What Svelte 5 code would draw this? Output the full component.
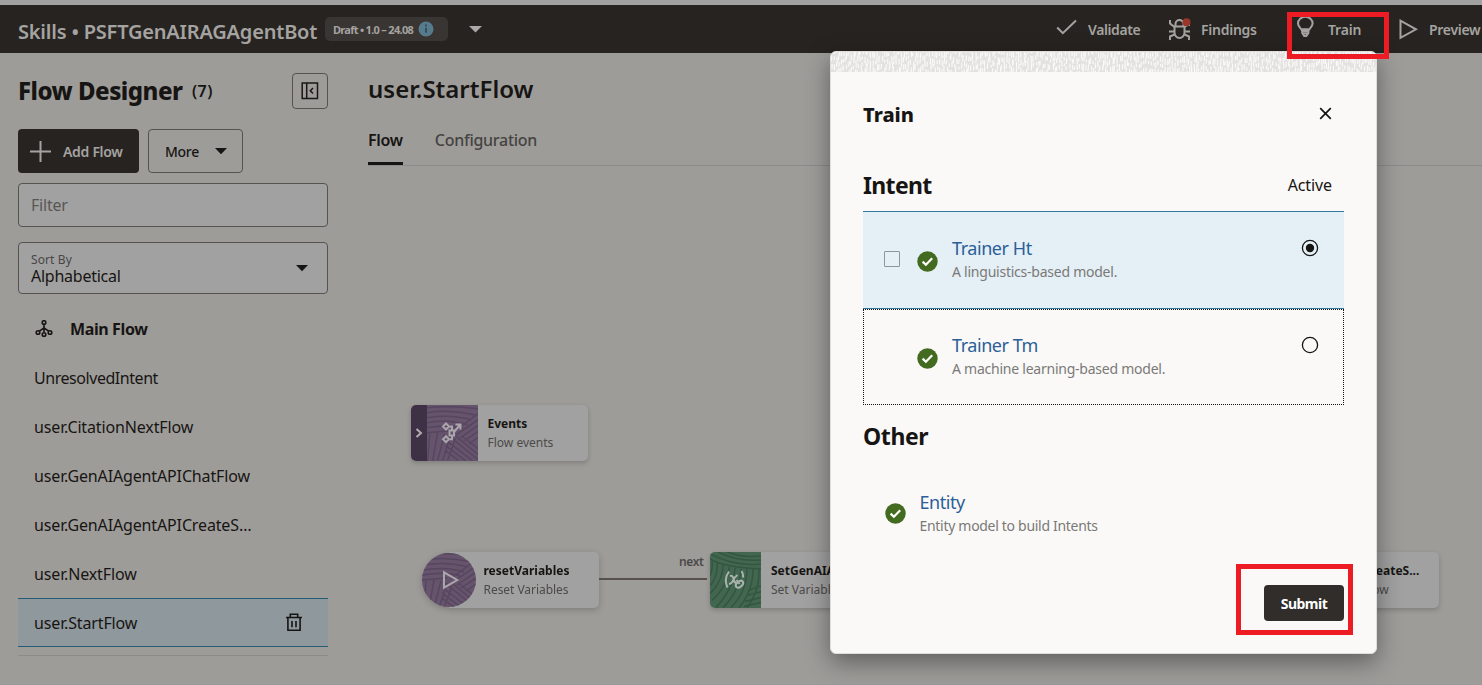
<script>
  const flows = [
    { name: 'UnresolvedIntent', builtIn: true },
    { name: 'user.CitationNextFlow' },
    { name: 'user.GenAIAgentAPIChatFlow' },
    { name: 'user.GenAIAgentAPICreateS…' },
    { name: 'user.NextFlow' },
    { name: 'user.StartFlow', selected: true }
  ];

  const trainers = [
    { name: 'Trainer Ht', text: 'A linguistics-based model.', active: true },
    { name: 'Trainer Tm', text: 'A machine learning-based model.', active: false }
  ];

  // Short vertical brush strokes for the dialog's banner
  let seed = 7;
  const rand = () => {
    seed = (seed * 16807) % 2147483647;
    return seed / 2147483647;
  };
  let strokes = '';
  for (let x = 0; x < 547; x += 2.4) {
    for (let y = -4 + rand() * 5; y < 21; y += 5 + rand() * 4) {
      const h = 3 + rand() * 4;
      strokes += `M${(x + rand() * 1.6).toFixed(1)} ${y.toFixed(1)}l${(rand() - 0.7).toFixed(1)} ${h.toFixed(1)}`;
    }
  }
</script>

{#snippet woven()}
  <svg class="texture" viewBox="0 0 54 56" preserveAspectRatio="xMidYMid slice">
    <path d="M0 3Q25 0 54 4M0 8Q25 4 50 10M0 13Q25 9 46 15M0 18Q25 14 42 20M0 23Q25 19 38 24M0 28L25 26M54 8L28 27M54 14L31 30M54 20L35 33M54 26L39 36M54 32L44 39M2 56L4 29M7 56L12 28M12 56L19 29M17 56L25 31M22 56L30 34M54 56L23 31M54 51L30 31M47 56L21 36M40 56L20 41M33 56L20 46M54 45L36 31" />
  </svg>
{/snippet}

{#snippet leaf()}
  <svg class="texture green" viewBox="0 0 51 56" preserveAspectRatio="none">
    <path d="M8 0Q28 10 51 8M17 0Q33 6 51 4M0 2Q25 15 51 12M0 7Q15 16 51 17M7 11Q8 25 0 34M13 13Q13 29 0 42M19 15Q19 33 2 49M25 16Q24 36 6 56M31 17Q30 39 13 56M37 17Q37 40 21 56M43 17Q43 40 29 56M49 17Q50 40 37 56M2 9Q3 18 0 24M38 39L51 34M36 44L51 40M35 50L51 46M34 55L51 51" />
  </svg>
{/snippet}

{#snippet okBadge()}
  <svg class="ok" width="21" height="21" viewBox="0 0 21 21">
    <circle cx="10.5" cy="10.5" r="10.2" fill="#436b1f" />
    <path d="M5.6 10.6l3.3 3.2 6.3-6.6" fill="none" stroke="#fff" stroke-width="2.2" />
  </svg>
{/snippet}

<div class="app">
  <header>
    <h1>Skills • PSFTGenAIRAGAgentBot</h1>
    <div class="version">
      <span>Draft • 1.0 – 24.08</span>
      <svg width="16" height="16" viewBox="0 0 16 16">
        <circle cx="8" cy="8" r="7.5" fill="#567b8d" />
        <path d="M8 6.8v5M8 3.6v1.8" stroke="#2e4955" stroke-width="1.7" />
      </svg>
    </div>
    <svg class="caret" width="13" height="7" viewBox="0 0 13 7"><path d="M0 0h13L6.5 6.5z" fill="#aaa9a7" /></svg>
    <nav>
      <div class="action validate">
        <svg width="22" height="18" viewBox="0 0 22 18"><path d="M1.2 8.5l5.6 5.6L20 1.5" fill="none" stroke="#a5a3a1" stroke-width="2" /></svg>
        <span>Validate</span>
      </div>
      <div class="action findings">
        <svg width="23" height="23" viewBox="0 0 23 23">
          <g fill="none" stroke="#a5a3a1" stroke-width="2">
            <path d="M6.5 8.500h10v6a5 5.500 0 0 1-10 0zM7.500 8V6a3.900 3.900 0 0 1 8 0v2M2 2v3.500L6.500 9M1 13.500h5.500M2 22v-3.500l4.500-2M21 8v-3M16.500 9L21 6M16.500 13.500H22M21 22v-3.500l-4.500-2" />
          </g>
          <circle cx="18.500" cy="4.200" r="4" fill="#9b3628" />
        </svg>
        <span>Findings</span>
      </div>
      <div class="action train">
        <svg width="19" height="22" viewBox="0 0 19 22">
          <path d="M6.200 15.200C6 12.500 2 11.200 2 7.500a7.200 6.700 0 0 1 14.600 0c0 3.700-4 5-4.200 7.700zM6.200 15v2l2 3h2.200l2-3v-2M6 13.200h6.500M6.800 17.400h5" fill="none" stroke="#a5a3a1" stroke-width="2" />
        </svg>
        <span>Train</span>
      </div>
      <div class="action preview">
        <svg width="19" height="21" viewBox="0 0 19 21"><path d="M1.500 1.700v17.200L17 10.300z" fill="none" stroke="#a5a3a1" stroke-width="2" /></svg>
        <span>Preview</span>
      </div>
    </nav>
  </header>

  <div class="body">
    <aside>
      <div class="head">
        <h2>Flow Designer</h2>
        <span class="count">(7)</span>
        <button class="collapse" aria-label="Collapse">
          <svg width="18" height="18" viewBox="0 0 18 18"><path d="M1.200 1h15.300v15.500H1.200zM5.700 1v15.500" fill="none" stroke="#191715" stroke-width="1.500" /><path d="M12 6L9.300 8.800 12 11.600" fill="none" stroke="#191715" stroke-width="1.500" /></svg>
        </button>
      </div>
      <div class="buttons">
        <button class="add">
          <svg width="21" height="21" viewBox="0 0 21 21"><path d="M10.500 0v21M0 10.500h21" stroke="#a5a3a1" stroke-width="2" /></svg>
          <span>Add Flow</span>
        </button>
        <button class="more">
          <span>More</span>
          <svg width="12" height="7" viewBox="0 0 12 7"><path d="M0 0h12L6 6.200z" fill="#171513" /></svg>
        </button>
      </div>
      <div class="filter">Filter</div>
      <div class="sort">
        <div>
          <div class="label">Sort By</div>
          <div class="value">Alphabetical</div>
        </div>
        <svg width="12" height="7" viewBox="0 0 12 7"><path d="M0 0h12L6 6.200z" fill="#171513" /></svg>
      </div>
      <ul>
        <li class="main-flow">
          <svg width="18" height="18" viewBox="0 0 18 18">
            <g fill="none" stroke="#171513" stroke-width="1.600">
              <circle cx="9" cy="2.500" r="1.800" /><circle cx="3" cy="12.500" r="1.800" /><circle cx="15" cy="12.500" r="1.800" /><circle cx="9" cy="14.500" r="1.800" />
              <path d="M9 4.500v8M9 8L4.300 11.200M9 8l4.700 3.200" />
            </g>
          </svg>
          <span>Main Flow</span>
        </li>
        {#each flows as flow}
          <li class:selected={flow.selected} class:built-in={flow.builtIn}>
            <span>{flow.name}</span>
            {#if flow.selected}
              <svg width="18" height="19" viewBox="0 0 18 19"><path d="M1 4.500h16M5.300 4V1.200h7.400V4M2.900 5v12.200h12.200V5M7 8v6.200M11 8v6.200" fill="none" stroke="#171513" stroke-width="1.600" /></svg>
            {/if}
          </li>
        {/each}
      </ul>
      <div class="list-end"></div>
    </aside>

    <main>
      <h2>user.StartFlow</h2>
      <div class="tabs">
        <span class="tab current">Flow</span>
        <span class="tab">Configuration</span>
      </div>
      <div class="canvas">
        <div class="node events">
          <div class="handle"><svg width="8" height="12" viewBox="0 0 8 12"><path d="M1.500 2L6 6 1.500 10" fill="none" stroke="#b0aab1" stroke-width="2" /></svg></div>
          <div class="tile purple">
            {@render woven()}
            <svg class="glyph" width="22" height="24" viewBox="0 0 22 24">
              <g fill="none" stroke="#aba6ac" stroke-width="2">
                <path d="M5 2.500l3 3-3 3-3-3zM5 15.200l3 3-3 3-3-3zM8 5.500h3v4.500M8 18.200h3V14M8.500 9.500h4.500v5H8.500zM13 11l6-7M14.500 3.500h5v5" />
              </g>
            </svg>
          </div>
          <div class="text"><b>Events</b><span>Flow events</span></div>
        </div>

        <div class="node reset">
          <div class="disc">
            {@render woven()}
            <svg class="glyph play" width="18" height="20" viewBox="0 0 18 20"><path d="M2 2.300v15.400L15.200 10z" fill="none" stroke="#aba6ac" stroke-width="2" /></svg>
          </div>
          <div class="text"><b>resetVariables</b><span>Reset Variables</span></div>
        </div>

        <div class="link"></div>
        <span class="link-label">next</span>

        <div class="node setvars">
          <div class="tile leafy">
            {@render leaf()}
            <svg class="glyph" width="22" height="20" viewBox="0 0 22 20">
              <g fill="none" stroke="#aab3ad" stroke-width="2">
                <path d="M5 1.500Q-.5 9 3.500 17.500M17.500 1q2 3 1.500 6.500M6 6q2.800-1 3.500 3t3 4M13.500 5Q10 7.500 9 10.500t-4 3.500" />
                <ellipse cx="15.500" cy="14.200" rx="4.200" ry="2.600" transform="rotate(-42 15.500 14.200)" /><path d="M12.500 10l3 4" />
              </g>
            </svg>
          </div>
          <div class="text"><b>SetGenAIA</b><span>Set Variables</span></div>
        </div>

        <div class="node create">
          <div class="text"><b>CreateS...</b><span>Flow</span></div>
        </div>
      </div>
    </main>
  </div>

  <section class="dialog">
    <svg class="banner" width="545" height="20" viewBox="0 0 545 20"><path d={strokes} fill="none" stroke="#faf9f7" stroke-width="1.200" /></svg>
    <div class="title-row">
      <h3>Train</h3>
      <svg width="13" height="13" viewBox="0 0 13 13"><path d="M1.200 1.200l10.600 10.600M11.800 1.200L1.200 11.800" stroke="#171513" stroke-width="1.700" /></svg>
    </div>
    <div class="group-row">
      <h4>Intent</h4>
      <span>Active</span>
    </div>
    <div class="trainers">
      {#each trainers as t}
        <div class="trainer" class:active={t.active}>
          <div class="check">{#if t.active}<i></i>{/if}</div>
          {@render okBadge()}
          <div class="info"><a>{t.name}</a><p>{t.text}</p></div>
          <svg class="radio" width="18" height="18" viewBox="0 0 18 18">
            <circle cx="9" cy="9" r="7.600" fill="none" stroke="#171513" stroke-width="1.300" />
            {#if t.active}<circle cx="9" cy="9" r="4.200" fill="#171513" />{/if}
          </svg>
        </div>
      {/each}
    </div>
    <h4 class="other">Other</h4>
    <div class="entity">
      {@render okBadge()}
      <div class="info"><a>Entity</a><p>Entity model to build Intents</p></div>
    </div>
    <div class="foot"><button class="submit">Submit</button></div>
  </section>

  <div class="mark mark-train"></div>
  <div class="mark mark-submit"></div>
</div>

<style>
  :global(body) { margin: 0; background: #9e9c99; }
  * { box-sizing: border-box; }
  h1, h2, h3, h4, p, ul { margin: 0; padding: 0; }
  button { font: inherit; margin: 0; text-align: left; }
  svg { display: block; flex: none; }
  span, h1, h2, b, a { white-space: nowrap; }
  .app {
    position: relative; width: 1482px; height: 685px; overflow: hidden;
    background: #9e9c99; border-top: 5px solid #a1a1a1;
    font-family: "Noto Sans", "Open Sans", sans-serif; font-size: 16px; color: #171513;
  }

  header { display: flex; align-items: center; height: 48px; padding-left: 18px; background: #272320; color: #a5a3a1; }
  h1 { width: 307px; font-size: 20px; line-height: 24px; font-weight: 600; letter-spacing: -0.2px; padding-top: 5px; }
  .version { display: flex; align-items: center; width: 123px; height: 24px; padding-left: 8px; border-radius: 5px; background: #393532; font-size: 11px; font-weight: 700; letter-spacing: -0.7px; }
  .version span { width: 85px; }
  .caret { margin-left: 21px; }
  nav { display: flex; margin-left: auto; height: 48px; font-size: 14px; font-weight: 600; }
  .action { display: flex; align-items: center; flex: none; }
  .validate { width: 112px; gap: 10px; letter-spacing: -0.4px; padding-top: 1px; }
  .validate svg { margin-top: -4px; }
  .findings { width: 128px; gap: 10px; letter-spacing: -0.25px; margin-left: 0; }
  .train { width: 102px; gap: 13px; letter-spacing: -0.2px; padding-top: 1px; }
  .train svg { margin-top: -5px; }
  .preview { width: 84px; gap: 11px; letter-spacing: -0.3px; padding: 1px 0 0 1px; }
  .preview svg { margin-top: -1px; }

  .body { display: flex; height: 632px; border-bottom: 1px solid #97999c; }
  aside { width: 328px; padding: 20px 0 0 18px; flex: none; }
  .head { display: flex; align-items: center; height: 36px; }
  .head h2 { width: 174px; font-size: 24px; line-height: 36px; font-weight: 800; letter-spacing: -0.5px; }
  .count { font-weight: 600; letter-spacing: .4px; }
  .collapse { display: grid; place-items: center; width: 36px; height: 36px; padding: 0; margin-left: auto; border: 1px solid #555350; border-radius: 4px; background: none; }
  .buttons { display: flex; gap: 9px; margin: 20px 0 10px; font-size: 14px; }
  .buttons button { display: flex; align-items: center; height: 44px; border-radius: 4px; padding: 0 0 0 12px; }
  .add { width: 121px; border: 0; background: #272320; color: #a5a3a1; font-weight: 600; letter-spacing: -0.3px; gap: 12px; }
  .more { width: 95px; border: 1px solid #555350; background: none; color: #171513; font-weight: 500; }
  .buttons .more { padding-left: 16px; letter-spacing: -0.3px; }
  .buttons span { padding-top: 1px; }
  .more span { width: 50px; }
  .filter { height: 44px; padding-left: 12px; line-height: 42px; border: 1px solid #555350; border-radius: 4px; background: #a1a1a1; color: #595755; letter-spacing: -0.2px; }
  .sort { display: flex; align-items: center; justify-content: space-between; height: 52px; margin: 15px 0 10px; padding: 0 19px 0 12px; border: 1px solid #555350; border-radius: 4px; background: #a1a1a1; }
  .label { font-size: 12px; line-height: 14px; color: #494745; padding-top: 2px; letter-spacing: .1px; }
  .value { line-height: 18px; letter-spacing: -0.25px; }
  ul { list-style: none; }
  li { display: flex; align-items: center; justify-content: space-between; height: 49px; padding: 0 25px 0 16px; letter-spacing: -0.14px; }
  .built-in { letter-spacing: -0.45px; }
  .main-flow { justify-content: flex-start; gap: 17px; padding-left: 17px; font-weight: 700; letter-spacing: -0.38px; }
  .selected { background: #8f989c; border-top: 1px solid #245a73; border-bottom: 1px solid #245a73; }
  .list-end { height: 9px; border-bottom: 1px solid #8d8b89; }

  main { flex: 1; min-width: 0; padding: 19px 0 0 40px; }
  main h2 { font-size: 24px; line-height: 34px; font-weight: 600; letter-spacing: 0; }
  .tabs { display: flex; gap: 32px; height: 60px; padding-top: 19px; border-bottom: 1px solid #8d8b89; }
  .tab { height: 40px; line-height: 31px; font-weight: 500; color: #454341; letter-spacing: -0.27px; }
  .current { font-weight: 600; color: #171513; border-bottom: 3px solid #171513; letter-spacing: -0.3px; }
  .canvas { position: relative; height: 518px; font-size: 12px; }
  .node { position: absolute; display: flex; height: 55.5px; border-radius: 5px; background: #a1a1a1; box-shadow: 0 2px 5px rgba(0, 0, 0, .2); }
  .text { display: flex; flex-direction: column; padding: 9px 0 0 10px; }
  .text b, .text span { line-height: 19px; }
  .text b { letter-spacing: 0; font-weight: 700; }
  .text span { color: #4c4a48; }
  .events { left: 42.5px; top: 239px; width: 177.500px; overflow: clip; border-radius: 5px; }
  .handle { display: grid; place-items: center; width: 16px; background: #3e3145; }
  .tile, .disc { position: relative; display: grid; place-items: center; flex: none; overflow: hidden; }
  .tile { width: 51px; }
  .purple, .disc { background: #66536c; }
  .texture { position: absolute; inset: 0; width: 100%; height: 100%; fill: none; stroke: #574660; stroke-width: 1.500; }
  .green { stroke: #345641; }
  .glyph { position: relative; }
  .play { margin-left: 3px; }
  .reset { left: 54px; top: 386px; width: 176.500px; background: linear-gradient(90deg, transparent 27px, #a1a1a1 27px); box-shadow: none; filter: drop-shadow(0 2px 3px rgba(0, 0, 0, .2)); }
  .disc { width: 54px; height: 54px; border-radius: 50%; margin-top: 1px; }
  .reset .text { padding-left: 7.5px; }
  .reset .text span { letter-spacing: -0.05px; }
  .link { position: absolute; left: 231px; top: 412px; width: 108px; height: 2px; background: #58514b; }
  .link-label { position: absolute; left: 311px; top: 386px; line-height: 19px; font-weight: 600; color: #4c4a48; letter-spacing: -0.4px; }
  .setvars { left: 341.500px; top: 386px; width: 189px; }
  .leafy { background: #426650; border-radius: 5px 0 0 5px; }
  .setvars .text { padding-left: 10.500px; }
  .create { left: 882px; top: 386px; width: 189px; }
  .create .text { padding-left: 113px; }

  .dialog { position: absolute; left: 830px; top: 46px; width: 547px; height: 603px; border: 1px solid #e0dedc; border-radius: 6px; background: #faf9f7; box-shadow: 0 8px 24px rgba(0, 0, 0, .4); overflow: hidden; padding: 0 32px; }
  .banner { margin: 0 -32px; background: #e4e2e1; }
  .title-row { display: flex; align-items: center; justify-content: space-between; height: 84px; padding-right: 12px; }
  .title-row svg { margin-top: -1px; }
  h3 { font-size: 20px; font-weight: 800; letter-spacing: 0; line-height: 28px; padding-top: 1px; }
  .group-row { display: flex; align-items: center; justify-content: space-between; height: 55px; padding: 2px 12px 0 0; }
  .group-row span { letter-spacing: -0.1px; }
  h4 { font-size: 23px; line-height: 30px; font-weight: 700; letter-spacing: -0.4px; }
  .group-row h4 { letter-spacing: -0.65px; }
  .trainer { display: flex; height: 96px; padding: 26px 24px 0 20px; border: 1px dotted #171513; }
  .trainer.active { height: 98px; padding: 27px 25px 0 21px; border: solid #30799c; border-width: 1px 0; background: #e4f0f6; }
  .check { width: 33px; padding-top: 12px; }
  .check i { display: block; width: 16px; height: 16px; border: 1px solid #8f9599; border-radius: 1px; }
  .ok { margin-top: 12px; }
  .info { flex: 1; padding-left: 14px; }
  .info a { display: block; font-size: 18px; line-height: 22px; color: #2c5f98; letter-spacing: -0.44px; }
  .info p { font-size: 14px; line-height: 24px; color: #7b7977; letter-spacing: -0.24px; white-space: nowrap; }
  .trainer .info a { margin-top: -2px; }
  .trainer .info p { margin-top: 1px; }
  .other { padding-top: 16px; }
  .entity { display: flex; padding: 40px 0 0 22px; }
  .entity .info { padding-left: 13.500px; }
  .entity .info p { margin-top: 1px; letter-spacing: -0.3px; }
  .foot { display: flex; justify-content: flex-end; padding-top: 47px; }
  .submit { width: 80px; height: 36px; padding: 0; border: 0; border-radius: 4px; background: #312d2a; color: #fff; font-size: 14px; font-weight: 700; letter-spacing: -0.5px; text-align: center; }

  .mark { position: absolute; border: 5px solid #ed1c24; }
  .mark-train { left: 1287px; top: 7px; width: 102px; height: 47px; }
  .mark-submit { left: 1236px; top: 559px; width: 117px; height: 71px; }
</style>
